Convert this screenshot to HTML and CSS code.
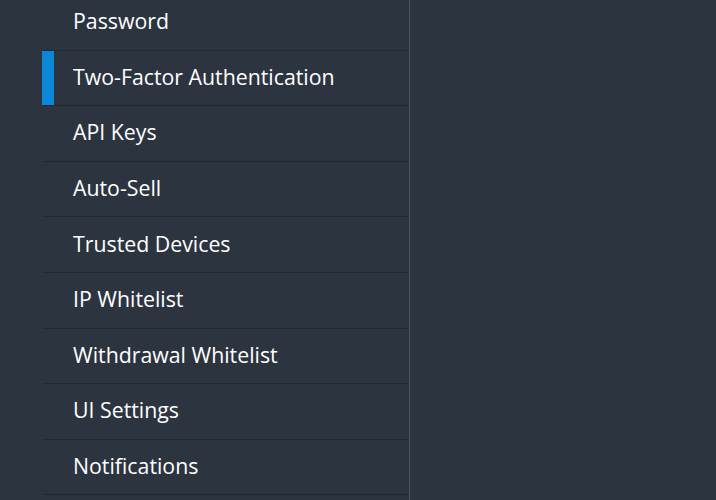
FILE: index.html
```html
<!DOCTYPE html>
<html>
<head>
  <meta charset="UTF-8">
  <title>Security | Account</title>
  <meta name="viewport" content="width=device-width, initial-scale=1.0">
  <link rel="stylesheet" href="styles.css">
</head>
<body>
  <div class="layout">
    <nav class="sidebar">
      <ul>
        <li><a href="#">Password</a></li>
        <li class="active"><a href="#">Two-Factor Authentication</a></li>
        <li><a href="#">API Keys</a></li>
        <li><a href="#">Auto-Sell</a></li>
        <li><a href="#">Trusted Devices</a></li>
        <li><a href="#">IP Whitelist</a></li>
        <li><a href="#">Withdrawal Whitelist</a></li>
        <li><a href="#">UI Settings</a></li>
        <li><a href="#">Notifications</a></li>
      </ul>
    </nav>
    <main class="content"></main>
  </div>
</body>
</html>
```

FILE: styles.css
```css
html, body {
  height: 100%;
}
body {
  margin: 0;
  padding: 0;
  font-family: 'Open Sans', 'Noto Sans', sans-serif;
  background: #2c3440;
  color: #fff;
  overflow: hidden;
}
.layout {
  display: flex;
  height: 100%;
  padding-left: 43px;
}
.sidebar {
  width: 366px;
  flex-shrink: 0;
  border-right: 1px solid #4c5462;
}
.sidebar ul {
  list-style: none;
  margin: -5px 0 0 0;
  padding: 0;
}
.sidebar li {
  position: relative;
  box-sizing: border-box;
  height: 55.6px;
  border-bottom: 1px solid #222933;
  display: flex;
  align-items: center;
}
.sidebar li a {
  display: block;
  padding: 0 0 3px 30px;
  color: #fff;
  text-decoration: none;
  font-size: 21.3px;
}
.sidebar li.active::before {
  content: "";
  position: absolute;
  left: -1px;
  top: 0;
  bottom: 0;
  width: 12px;
  background: #0b87d9;
}
.content {
  flex: 1;
}
```
